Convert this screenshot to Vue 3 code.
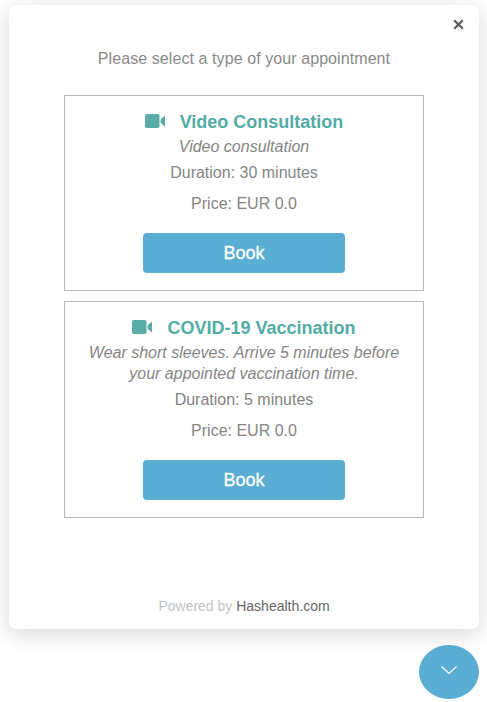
<script setup>
const types = [
  { id: 1, name: 'Video Consultation', note: 'Video consultation', duration: 'Duration: 30 minutes', price: 'Price: EUR 0.0' },
  {
    id: 2,
    name: 'COVID-19 Vaccination',
    note: 'Wear short sleeves. Arrive 5 minutes before your appointed vaccination time.',
    duration: 'Duration: 5 minutes',
    price: 'Price: EUR 0.0',
  },
]
</script>

<template>
  <div class="page">
    <div class="modal">
      <button class="close" aria-label="Close">
        <svg width="11" height="11" viewBox="0 0 11 11">
          <path d="M1.200 1.200 9.800 9.800M9.800 1.200 1.200 9.800" stroke="#5f5f5f" stroke-width="2.300" fill="none" />
        </svg>
      </button>
      <p class="heading">Please select a type of your appointment</p>
      <div class="list">
        <div v-for="t in types" :key="t.id" class="card">
          <div class="title">
            <svg class="cam" width="20" height="14" viewBox="0 0 20 14">
              <rect x="0" y="0" width="14.500" height="14" rx="1.800" fill="#5aaca6" />
              <path d="M15.600 5.200 20 1.400v11.200l-4.400-3.800z" fill="#5aaca6" />
            </svg>
            <span>{{ t.name }}</span>
          </div>
          <div class="note">{{ t.note }}</div>
          <div class="line">{{ t.duration }}</div>
          <div class="line price">{{ t.price }}</div>
          <button class="book">Book</button>
        </div>
      </div>
      <div class="footer">Powered by <span class="brand">Hashealth.com</span></div>
    </div>
    <button class="fab" aria-label="Collapse">
      <svg class="chevron" width="18" height="10" viewBox="0 0 18 10">
        <path d="M1.500 1.500 9 8.500l7.500-7" stroke="#fff" stroke-width="1.200" fill="none" />
      </svg>
    </button>
  </div>
</template>

<style scoped>
.page {
  width: 487px;
  height: 702px;
  padding: 5px 8px 0 9px;
  box-sizing: border-box;
  overflow: hidden;
  display: flex;
  flex-direction: column;
  align-items: flex-end;
  font-family: "Liberation Sans", Arial, sans-serif;
}
.modal {
  position: relative;
  width: 470px;
  height: 624px;
  background: #fff;
  border-radius: 7px;
  box-shadow: 0 5px 22px rgba(0, 0, 0, 0.16);
  display: flex;
  flex-direction: column;
  align-items: center;
}
.close {
  position: absolute;
  top: 14px;
  right: 15px;
  padding: 0;
  border: none;
  background: none;
  display: flex;
}
.heading {
  margin: 44px 0 0;
  font-size: 16px;
  line-height: 20px;
  letter-spacing: 0.08px;
  color: #8a8a8a;
}
.list {
  margin-top: 26px;
  display: flex;
  flex-direction: column;
  gap: 10px;
}
.card {
  width: 360px;
  box-sizing: border-box;
  border: 1px solid #b9b9b9;
  padding: 14px 20px 17px;
  display: flex;
  flex-direction: column;
  align-items: center;
  text-align: center;
  color: #858585;
  font-size: 16px;
}
.title {
  display: flex;
  align-items: center;
  gap: 15px;
  height: 24px;
  font-size: 18px;
  font-weight: 700;
  color: #52aca5;
}
.cam {
  margin-top: -2px;
}
.note {
  font-style: italic;
  line-height: 21px;
  margin-top: 2px;
  color: #858585;
}
.line {
  line-height: 23px;
  margin-top: 4px;
}
.price {
  margin-top: 8px;
}
.book {
  margin-top: 18px;
  width: 202px;
  height: 40px;
  border: none;
  border-radius: 4px;
  background: #5aaed4;
  color: #fff;
  font-family: inherit;
  font-size: 18px;
  -webkit-text-stroke: 0.3px #fff;
}
.footer {
  margin-top: auto;
  margin-bottom: 15px;
  font-size: 14px;
  line-height: 16px;
  color: #c4c4c4;
}
.brand {
  color: #666;
}
.fab {
  margin-top: 16px;
  flex: none;
  width: 60px;
  height: 54px;
  padding: 0;
  border: none;
  border-radius: 50%;
  background: #5aaed4;
  display: flex;
  align-items: center;
  justify-content: center;
}
.chevron {
  margin-bottom: 5px;
}
</style>
